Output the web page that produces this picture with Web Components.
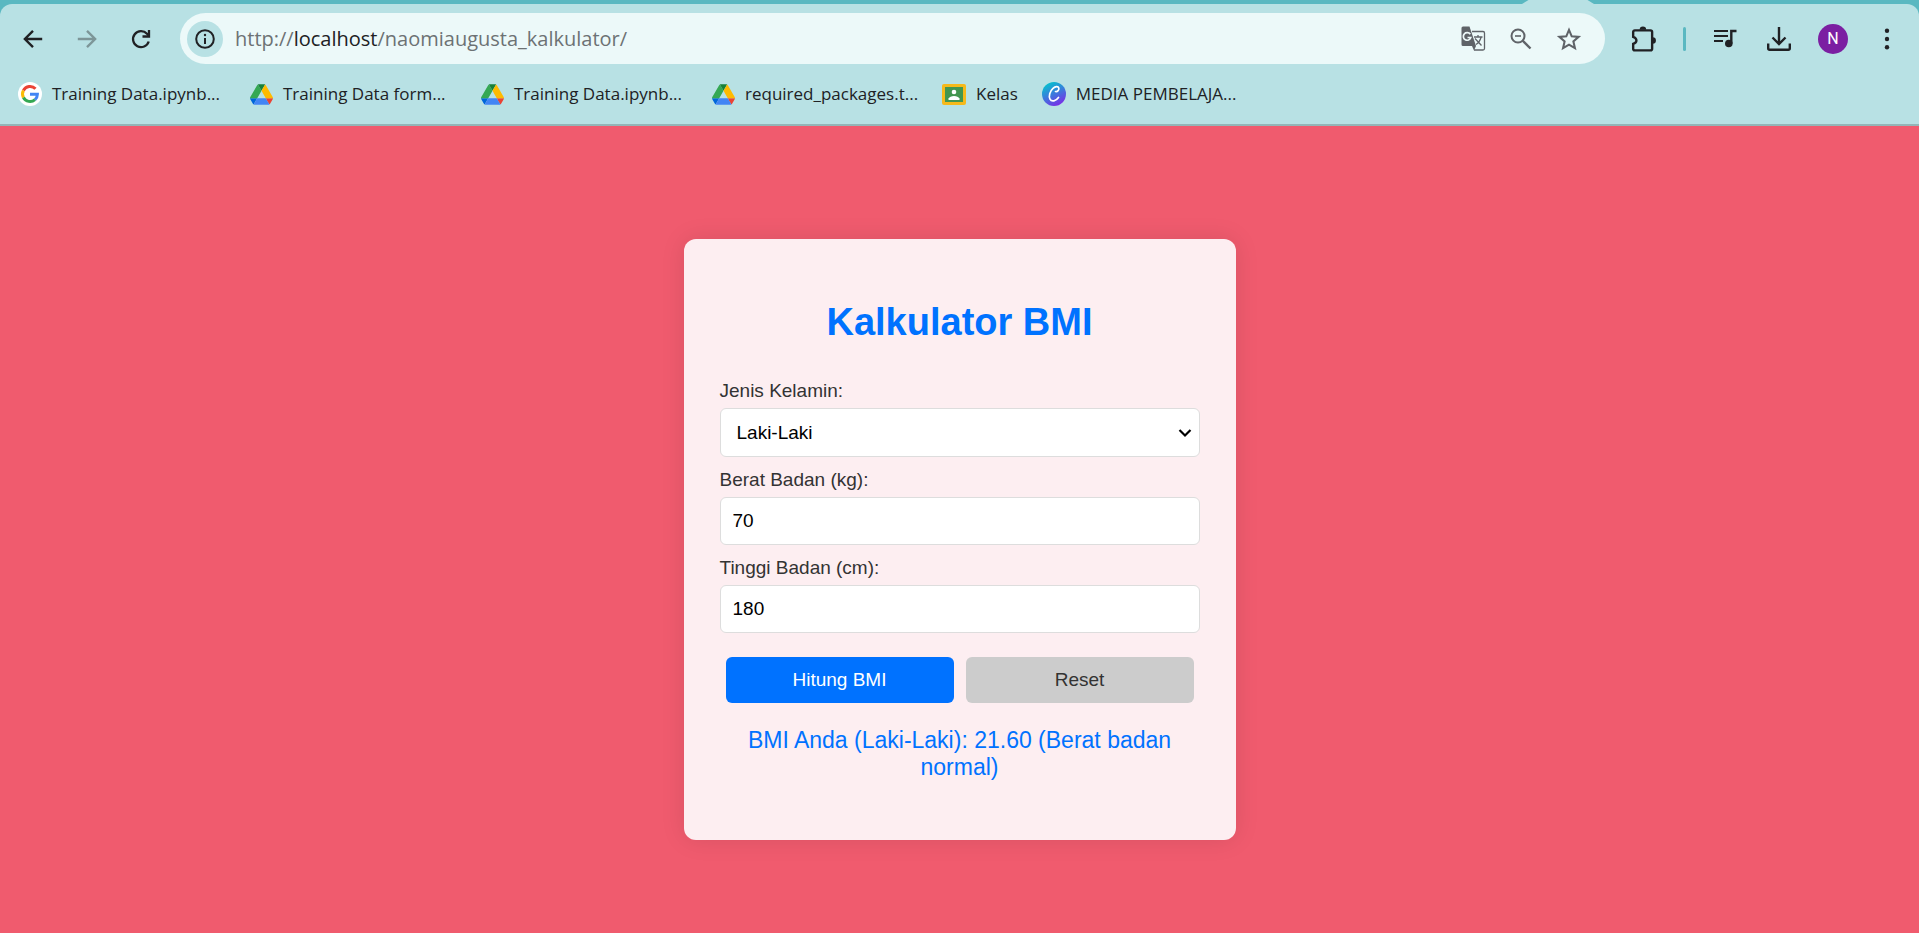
<!DOCTYPE html>
<html lang="id">
<head>
<meta charset="utf-8">
<title>Kalkulator BMI</title>
<style>
  body { margin: 0; min-height: 100vh; display: flex; flex-direction: column; background: #f05b6e; font-family: "Liberation Sans", Arial, sans-serif; }
  main { flex: 1; display: flex; align-items: center; justify-content: center; padding-top: 20px; }
</style>
</head>
<body>
<browser-chrome>
  <browser-toolbar slot="toolbar"></browser-toolbar>
  <bookmarks-bar slot="bookmarks">
    <bookmark-item icon="google" wide>Training Data.ipynb...</bookmark-item>
    <bookmark-item icon="drive" wide>Training Data form...</bookmark-item>
    <bookmark-item icon="drive" wide>Training Data.ipynb...</bookmark-item>
    <bookmark-item icon="drive" wide>required_packages.t...</bookmark-item>
    <bookmark-item icon="classroom">Kelas</bookmark-item>
    <bookmark-item icon="canva">MEDIA PEMBELAJA...</bookmark-item>
  </bookmarks-bar>
</browser-chrome>
<main>
  <bmi-calculator></bmi-calculator>
</main>

<script>
const ICONS = {
  back: '<svg viewBox="0 0 24 24" width="26" height="26"><path d="M20.500 12H5M12 4.500L4.500 12l7.500 7.500" fill="none" stroke="#202124" stroke-width="2.200"/></svg>',
  forward: '<svg viewBox="0 0 24 24" width="26" height="26"><path d="M3.500 12H19M12 4.500l7.500 7.500-7.500 7.500" fill="none" stroke="#7d9698" stroke-width="2.200"/></svg>',
  reload: '<svg viewBox="0 0 24 24" width="24" height="24"><path d="M19.700 14.500A8 8 0 1 1 18 6.800l2 2.200" fill="none" stroke="#202124" stroke-width="2.300"/><path d="M20 3v6.500h-6.500" fill="none" stroke="#202124" stroke-width="2.300"/></svg>',
  info: '<svg viewBox="0 0 24 24" width="24" height="24"><circle cx="12" cy="12" r="8.800" fill="none" stroke="#202124" stroke-width="2"/><path d="M12 11v6" stroke="#202124" stroke-width="2"/><circle cx="12" cy="8" r="1.200" fill="#202124"/></svg>',
  translate: '<svg viewBox="0 0 25 25" width="25" height="25"><path d="M11 5.500h11a1.500 1.500 0 0 1 1.500 1.500v15.500a1.500 1.500 0 0 1-1.500 1.500H13" fill="none" stroke="#5f6368" stroke-width="1.300"/><path d="M2 .5h6.500l6.500 19.500H2A1.500 1.500 0 0 1 .5 18.500V2A1.500 1.500 0 0 1 2 .5z" fill="#5f6368"/><path d="M11 20h4l-2 4.500z" fill="#5f6368"/><path d="M9.300 8.300A3.800 3.800 0 1 0 9.800 11.500H6.500" fill="none" stroke="#eef9f9" stroke-width="1.700"/><path d="M13 11h8.500M17 9v2M14 12.500l6.500 7M20 11.500q-1.500 5-5 7" fill="none" stroke="#5f6368" stroke-width="1.300"/></svg>',
  zoomout: '<svg viewBox="0 0 24 24" width="24" height="24"><circle cx="9" cy="9" r="6.500" fill="none" stroke="#5f6368" stroke-width="2"/><path d="M13.500 13.500l8 8" stroke="#5f6368" stroke-width="2.400"/><path d="M6 9h6" stroke="#5f6368" stroke-width="1.600"/></svg>',
  star: '<svg viewBox="0 0 24 24" width="26" height="26"><path d="M12 3.600l2.500 5.900 6.400.55-4.850 4.200 1.450 6.250L12 17.200l-5.500 3.300 1.450-6.250-4.850-4.200 6.400-.55z" fill="none" stroke="#5f6368" stroke-width="1.900"/></svg>',
  puzzle: '<svg viewBox="1 1 24 24" width="26" height="26"><path d="M4.500 5H19a1.500 1.500 0 0 1 1.500 1.500V22a1.500 1.500 0 0 1-1.500 1.500H4.500A1.500 1.500 0 0 1 3 22v-4.500q3-1 3-3.200T3 11V6.500A1.500 1.500 0 0 1 4.500 5z" fill="none" stroke="#202124" stroke-width="2.200"/><path d="M9 4.500a3 3 0 0 1 6 0zM21 11.300a3 3 0 0 1 0 6z" fill="#202124"/></svg>',
  media: '<svg viewBox="0 0 24 24" width="24" height="24"><path d="M1 4h14M1 9h14M1 14h9" stroke="#202124" stroke-width="2.200"/><circle cx="15.800" cy="16.500" r="3.800" fill="#202124"/><path d="M18.300 16.500V4H23.500" fill="none" stroke="#202124" stroke-width="2.400"/></svg>',
  download: '<svg viewBox="0 0 24 24" width="24" height="24"><path d="M12 0v16M5.500 10.500L12 17l6.500-6.500" fill="none" stroke="#202124" stroke-width="2.400"/><path d="M1.200 16.500v4.800a1.500 1.500 0 0 0 1.500 1.500h18.600a1.500 1.500 0 0 0 1.500-1.500v-4.800" fill="none" stroke="#202124" stroke-width="2.400"/></svg>',
  menu: '<svg viewBox="0 0 24 24" width="24" height="24"><g fill="#202124"><circle cx="12" cy="3.700" r="2.200"/><circle cx="12" cy="12" r="2.200"/><circle cx="12" cy="20.300" r="2.200"/></g></svg>',
  google: '<svg viewBox="0 0 24 24" width="24" height="24"><circle cx="12" cy="12" r="12" fill="#fff"/><g fill="none" stroke-width="3"><path d="M17.500 6.800A7.500 7.500 0 0 0 5.400 8.500" stroke="#ea4335"/><path d="M5.400 8.500a7.500 7.500 0 0 0 0 7" stroke="#fbbc05"/><path d="M5.400 15.500a7.500 7.500 0 0 0 11.600 2.100" stroke="#34a853"/><path d="M17 17.600a7.500 7.500 0 0 0 2.400-5.400H12" stroke="#4285f4"/></g></svg>',
  drive: '<svg viewBox="0 0 87.300 78" width="23" height="21"><path d="M6.600 66.850l3.850 6.650c.8 1.400 1.950 2.500 3.300 3.300L27.500 53H0c0 1.550.4 3.100 1.200 4.500z" fill="#0066da"/><path d="M43.650 25L29.900 1.200c-1.350.8-2.500 1.900-3.300 3.300L1.200 48.500A9 9 0 0 0 0 53h27.500z" fill="#34a853"/><path d="M73.550 76.800c1.350-.8 2.500-1.900 3.300-3.300l1.600-2.750L86.100 57.500c.8-1.400 1.200-2.950 1.200-4.500H59.800l5.850 11.500z" fill="#ea4335"/><path d="M43.650 25L57.400 1.200C56.050.4 54.500 0 52.900 0H34.400c-1.600 0-3.150.45-4.500 1.200z" fill="#188038"/><path d="M59.800 53H27.500L13.750 76.800c1.350.8 2.900 1.200 4.500 1.200h50.800c1.600 0 3.150-.45 4.500-1.200z" fill="#4285f4"/><path d="M73.400 26.500L60.700 4.500c-.8-1.400-1.950-2.500-3.300-3.300L43.650 25 59.800 53h27.450c0-1.550-.4-3.100-1.200-4.500z" fill="#ffba00"/></svg>',
  classroom: '<svg viewBox="0 0 24 21" width="24" height="21"><rect width="24" height="21" rx="2" fill="#f6b91a"/><rect x="3" y="3" width="18" height="15" fill="#43964f"/><circle cx="12" cy="8" r="2.300" fill="#fff"/><path d="M6.500 16v-1.500Q8 12 12 12t5.500 2.500V16z" fill="#fff"/></svg>',
  canva: '<svg viewBox="0 0 24 24" width="24" height="24"><defs><linearGradient id="g" x1=".2" y1="0" x2=".7" y2="1"><stop offset="0" stop-color="#00c9cc"/><stop offset=".5" stop-color="#3a7bdc"/><stop offset="1" stop-color="#7d2ae8"/></linearGradient></defs><circle cx="12" cy="12" r="12" fill="url(#g)"/><path d="M13.500 9.500c2 .5 3.800-1.500 3.300-3.500-.6-2-3.500-1.600-5.800.4-3.200 2.800-4.500 8-3 10.800 1.600 3 6 2 8.500-1.700" fill="none" stroke="#fff" stroke-width="1.700" stroke-linecap="round"/></svg>'
};

const define = (name, html, setup) => {
  const template = document.createElement('template');
  template.innerHTML = html;
  customElements.define(name, class extends HTMLElement {
    constructor() {
      super();
      this.attachShadow({ mode: 'open' }).append(template.content.cloneNode(true));
    }
    connectedCallback() { if (setup) setup(this, this.shadowRoot); }
  });
};

customElements.define('ui-icon', class extends HTMLElement {
  static observedAttributes = ['name'];
  constructor() {
    super();
    this.attachShadow({ mode: 'open' });
  }
  attributeChangedCallback(attribute, before, name) {
    this.shadowRoot.innerHTML = `<style>:host { display: inline-flex; align-items: center; justify-content: center; } svg { display: block; }</style>${ICONS[name] || ''}`;
  }
});

define('browser-chrome', `
<style>
  :host { display: block; background: #5ab8c1; border-bottom: 2px solid #94b5b7; padding-top: 4px; position: relative; font-family: "Open Sans", "Noto Sans", sans-serif; }
  .tab { position: absolute; top: 0; right: 325px; width: 72px; height: 4px; background: #b8e1e4; clip-path: polygon(9% 0, 91% 0, 100% 100%, 0 100%); }
  .panel { background: #b8e1e4; border-radius: 12px 12px 0 0; }
</style>
<div class="tab"></div>
<div class="panel"><slot name="toolbar"></slot><slot name="bookmarks"></slot></div>`);

define('browser-toolbar', `
<style>
  :host { display: flex; align-items: center; gap: 24px; padding: 9px 17px 0 18px; color: #202124; }
  button { display: flex; align-items: center; justify-content: center; flex: none; width: 30px; height: 30px; padding: 0; border: 0; border-radius: 50%; background: none; font: inherit; color: inherit; }
  .address { flex: 1; display: flex; align-items: center; gap: 24px; height: 51px; box-sizing: border-box; padding: 0 24px 0 7px; border-radius: 26px; background: #ecf9f9; }
  .address button { width: 24px; }
  .address .info { width: 36px; height: 36px; background: #b8e1e4; }
  .url { flex: 1; margin-left: -12px; font-size: 20px; line-height: 28px; color: #6c7274; outline: 0; white-space: nowrap; }
  .url b { font-weight: 400; color: #202124; }
  .divider { width: 3px; height: 24px; border-radius: 2px; background: #5ab8c1; }
  .avatar { background: #7b1fa2; color: #fff; font: 16px Roboto, sans-serif; }
</style>
<button aria-label="Kembali"><ui-icon name="back"></ui-icon></button>
<button aria-label="Maju"><ui-icon name="forward"></ui-icon></button>
<button aria-label="Muat ulang"><ui-icon name="reload"></ui-icon></button>
<div class="address">
  <button class="info" aria-label="Info situs"><ui-icon name="info"></ui-icon></button>
  <div class="url" role="textbox" contenteditable="true" spellcheck="false" aria-label="Alamat">http://<b>localhost</b>/naomiaugusta_kalkulator/</div>
  <button aria-label="Terjemahkan"><ui-icon name="translate"></ui-icon></button>
  <button aria-label="Perkecil"><ui-icon name="zoomout"></ui-icon></button>
  <button aria-label="Tandai halaman"><ui-icon name="star"></ui-icon></button>
</div>
<button aria-label="Ekstensi"><ui-icon name="puzzle"></ui-icon></button>
<span class="divider"></span>
<button aria-label="Media"><ui-icon name="media"></ui-icon></button>
<button aria-label="Unduhan"><ui-icon name="download"></ui-icon></button>
<button class="avatar" aria-label="Profil">N</button>
<button aria-label="Menu"><ui-icon name="menu"></ui-icon></button>`);

define('bookmarks-bar', `
<style>:host { display: flex; align-items: center; height: 60px; padding: 0 18px; }</style>
<slot></slot>`);

define('bookmark-item', `
<style>
  :host { display: block; padding-right: 24px; }
  :host([wide]) { width: 231px; padding-right: 0; }
  a { display: flex; align-items: center; gap: 10px; color: #202124; text-decoration: none; font-size: 17px; line-height: 24px; white-space: nowrap; }
  ui-icon { width: 24px; height: 24px; }
</style>
<a href="#"><ui-icon></ui-icon><span><slot></slot></span></a>`,
  (host, root) => root.querySelector('ui-icon').setAttribute('name', host.getAttribute('icon')));

define('bmi-calculator', `
<style>
  :host { display: block; box-sizing: border-box; width: 552px; max-width: 100%; padding: 61px 36px 59px; border-radius: 12px; background: #fdeef1; box-shadow: 0 0 24px rgba(0, 0, 0, .1); color: #333; font-size: 19px; line-height: 22px; }
  h1 { margin: 0 0 36px; font-size: 38px; line-height: 44px; text-align: center; color: #0072ff; }
  label { display: block; margin-bottom: 6px; }
  input, select { display: block; box-sizing: border-box; width: 100%; height: 48px; margin: 0 0 12px; padding: 12px; border: 1px solid #ddd; border-radius: 6px; background: #fff; color: #000; font: inherit; }
  select { appearance: none; height: 49px; padding-left: 16px; background: #fff url("data:image/svg+xml,%3Csvg xmlns='http://www.w3.org/2000/svg' width='14' height='10'%3E%3Cpath d='M1.500 2l5.500 5.500L12.500 2' fill='none' stroke='%23000' stroke-width='2.200'/%3E%3C/svg%3E") no-repeat right 7px center; }
  input { appearance: textfield; }
  input::-webkit-inner-spin-button { appearance: none; }
  .actions { display: flex; gap: 12px; margin: 24px 6px; }
  button { flex: 1; padding: 12px; border: 0; border-radius: 6px; font: inherit; background: #0072ff; color: #fff; }
  button[type=reset] { background: #ccc; color: #333; }
  output { display: block; text-align: center; font-size: 23px; line-height: 27px; color: #0072ff; }
</style>
<h1>Kalkulator BMI</h1>
<form>
  <label for="gender">Jenis Kelamin:</label>
  <select id="gender"><option>Laki-Laki</option><option>Perempuan</option></select>
  <label for="weight">Berat Badan (kg):</label>
  <input id="weight" type="number" value="70">
  <label for="height">Tinggi Badan (cm):</label>
  <input id="height" type="number" value="180">
  <div class="actions"><button type="submit">Hitung BMI</button><button type="reset">Reset</button></div>
  <output for="gender weight height"></output>
</form>`,
  (host, root) => {
    const get = id => root.getElementById(id).value;
    const out = root.querySelector('output');
    const update = () => {
      const bmi = get('weight') / (get('height') / 100) ** 2;
      const kind = bmi < 18.5 ? 'Berat badan kurang' : bmi < 25 ? 'Berat badan normal' : bmi < 30 ? 'Berat badan berlebih' : 'Obesitas';
      out.textContent = `BMI Anda (${get('gender')}): ${bmi.toFixed(2)} (${kind})`;
    };
    root.querySelector('form').addEventListener('submit', e => { e.preventDefault(); update(); });
    root.querySelector('form').addEventListener('reset', () => { out.textContent = ''; });
    update();
  });
</script>
</body>
</html>
